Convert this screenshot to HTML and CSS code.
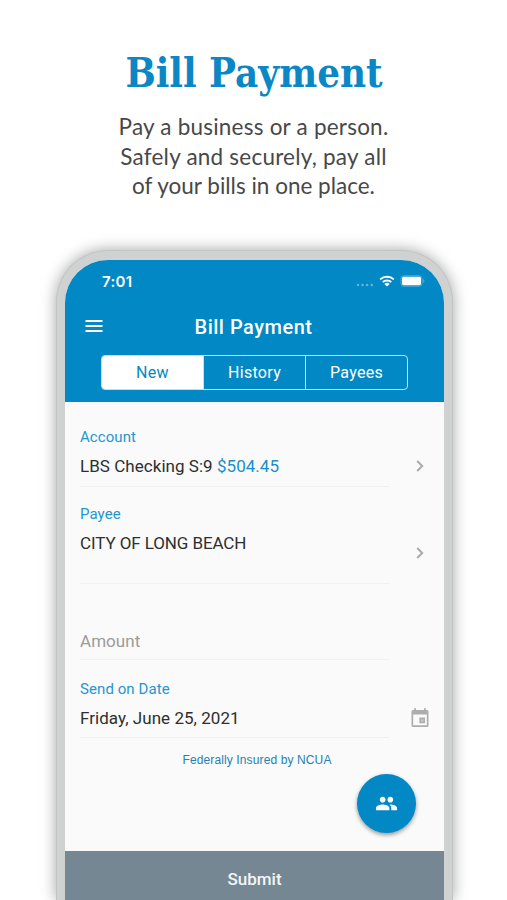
FILE: index.html
```html
<!DOCTYPE html>
<html lang="en">
<head>
    <meta charset="UTF-8">
    <meta name="viewport" content="width=device-width, initial-scale=1.0">
    <title>Bill Payment</title>
    <link rel="stylesheet" href="styles.css">
</head>
<body>
    <section class="promo">
        <h1><span>Bill Payment</span></h1>
        <p>Pay a business or a person.<br>Safely and securely, pay all<br><span class="last-line">of your bills in one place.</span></p>
    </section>

    <div class="phone">
        <div class="screen">
            <header>
                <div class="status-bar">
                    <span class="time">7:01</span>
                    <div class="status-icons">
                        <svg class="signal" width="18" height="4" viewBox="0 0 18 4">
                            <circle cx="2" cy="2" r="1.2"/>
                            <circle cx="6.6" cy="2" r="1.2"/>
                            <circle cx="11.2" cy="2" r="1.2"/>
                            <circle cx="15.8" cy="2" r="1.2"/>
                        </svg>
                        <svg class="wifi" width="16" height="12" viewBox="0 0 16 12">
                            <path d="M1.2 4.4a9.8 9.8 0 0 1 13.6 0M3.8 7.1a6.1 6.1 0 0 1 8.4 0" fill="none" stroke="#fff" stroke-width="2"/>
                            <path d="M8 11.4L5.4 8.9a3.8 3.8 0 0 1 5.2 0z" fill="#fff"/>
                        </svg>
                        <svg class="battery" width="26" height="12" viewBox="0 0 26 12">
                            <rect x="1" y=".8" width="21" height="10.4" rx="2.8" fill="none" stroke="#fff" stroke-opacity=".3"/>
                            <rect x="2" y="1.8" width="19" height="8.4" rx="1.6" fill="#fff"/>
                            <path d="M23.3 4v4c1.4-.6 1.4-3.4 0-4z" fill="#fff" fill-opacity=".4"/>
                        </svg>
                    </div>
                </div>
                <div class="title-bar">
                    <svg class="menu" width="18" height="12" viewBox="0 0 18 12">
                        <path d="M.5 1h17M.5 6h17M.5 11h17" stroke="#fff" stroke-width="2"/>
                    </svg>
                    <h2>Bill Payment</h2>
                </div>
                <nav class="tabs">
                    <a class="tab active">New</a>
                    <a class="tab">History</a>
                    <a class="tab">Payees</a>
                </nav>
            </header>

            <main>
                <div class="field account">
                    <div class="field-body">
                        <label>Account</label>
                        <div class="value">LBS Checking S:9 <span class="balance">$504.45</span></div>
                    </div>
                    <svg class="chevron" width="8" height="12" viewBox="0 0 8 12"><path d="M1.2 1l5 5-5 5"/></svg>
                </div>
                <div class="field payee">
                    <div class="field-body">
                        <label>Payee</label>
                        <div class="value">CITY OF LONG BEACH</div>
                    </div>
                    <svg class="chevron" width="8" height="12" viewBox="0 0 8 12"><path d="M1.2 1l5 5-5 5"/></svg>
                </div>
                <div class="field amount">
                    <div class="field-body">
                        <div class="value placeholder">Amount</div>
                    </div>
                </div>
                <div class="field date">
                    <div class="field-body">
                        <label>Send on Date</label>
                        <div class="value">Friday, June 25, 2021</div>
                    </div>
                    <svg class="calendar" width="18" height="20" viewBox="0 0 18 20">
                        <path d="M2 2h14a1.5 1.5 0 0 1 1.5 1.5v14A1.5 1.5 0 0 1 16 19H2a1.5 1.5 0 0 1-1.5-1.5v-14A1.5 1.5 0 0 1 2 2zm.2 4.500v10.800h13.600V6.500z" fill-rule="evenodd"/>
                        <path d="M3.200.3h1.800V3H3.200zM13 .3h1.800V3H13z"/>
                        <path d="M9.200 10.300h4v4h-4z" fill="#ccc" stroke="#adadad" stroke-width="1.7"/>
                    </svg>
                </div>
                <p class="insured">Federally Insured by NCUA</p>
                <button class="fab" aria-label="People">
                    <svg width="23" height="23" viewBox="0 0 24 24">
                        <path fill="#fff" d="M16 11c1.660 0 2.990-1.340 2.990-3S17.660 5 16 5s-3 1.340-3 3 1.340 3 3 3zm-8 0c1.660 0 2.990-1.340 2.990-3S9.660 5 8 5 5 6.340 5 8s1.340 3 3 3zm0 2c-2.330 0-7 1.170-7 3.500V19h14v-2.500c0-2.330-4.670-3.500-7-3.500zm8 0c-.29 0-.62.020-.97.050 1.160.84 1.970 1.970 1.970 3.450V19h6v-2.500c0-2.330-4.670-3.500-7-3.500z"/>
                    </svg>
                </button>
            </main>

            <button class="submit">Submit</button>
        </div>
    </div>
</body>
</html>
```

FILE: styles.css
```css
* {
    box-sizing: border-box;
}

body {
    margin: 0;
    height: 900px;
    overflow: hidden;
    background-color: #fff;
    font-family: Roboto, Arial, sans-serif;
    color: #333;
}

.promo {
    height: 250px;
    padding-top: 44px;
    text-align: center;
}

h1 {
    margin: 0;
    font-family: "DejaVu Serif", serif;
    font-size: 41px;
    line-height: 58px;
    font-weight: bold;
    color: #0a87c4;
    white-space: nowrap;
}

h1 span {
    display: inline-block;
    transform: scaleX(0.875);
}

.promo p {
    margin: 10px 0 0;
    font-family: Lato, sans-serif;
    font-size: 22.5px;
    line-height: 29.5px;
    letter-spacing: 0.22px;
    color: #484848;
}

.last-line {
    letter-spacing: 0;
}

.phone {
    width: 397px;
    height: 650px;
    margin-left: 56px;
    padding: 9px 8px 0;
    background-color: #d0d2d2;
    border: 1px solid #c3c5c5;
    border-bottom: none;
    border-radius: 52px 52px 0 0;
    box-shadow: 0 0 15px rgba(0,0,0,0.36);
}

.screen {
    height: 640px;
    display: flex;
    flex-direction: column;
    border-radius: 43px 43px 0 0;
    overflow: hidden;
    background-color: #fafafa;
}

header {
    height: 142px;
    flex-shrink: 0;
    background-color: #0288c5;
    color: #fff;
}

.status-bar {
    display: flex;
    justify-content: space-between;
    align-items: center;
    height: 42px;
    padding: 0 18px 0 37px;
}

.time {
    font-family: Inter, sans-serif;
    font-size: 15px;
    font-weight: 600;
    letter-spacing: 0.3px;
}

.status-icons {
    display: flex;
    align-items: center;
}

.signal {
    margin: 7px 5px 0 0;
    fill: rgba(255,255,255,0.4);
}

.wifi {
    margin-right: 5px;
}

.title-bar {
    display: grid;
    grid-template-columns: 1fr auto 1fr;
    align-items: center;
    height: 50px;
    padding: 0 22px 0 20px;
}

.menu {
    margin-bottom: 2px;
}

h2 {
    margin: 0;
    font-size: 20px;
    font-weight: 500;
    letter-spacing: 0.5px;
}

.tabs {
    display: flex;
    width: 307px;
    height: 35px;
    margin: 3px 0 0 36px;
    border: 1px solid rgba(255,255,255,0.75);
    border-radius: 4px;
    overflow: hidden;
}

.tab {
    flex: 1;
    display: flex;
    align-items: center;
    justify-content: center;
    font-size: 16px;
    letter-spacing: 0.3px;
}

.tab + .tab {
    border-left: 1px solid rgba(255,255,255,0.75);
}

.tab.active {
    background-color: #fff;
    color: #0288c5;
}

main {
    position: relative;
    flex: 1;
}

.field {
    display: flex;
    align-items: center;
    padding: 0 14px 0 15px;
}

.field-body {
    width: 309px;
    height: 100%;
    border-bottom: 1px solid #f0f0f0;
}

.account {
    height: 85px;
}

.account .field-body {
    padding-top: 25px;
}

.payee {
    height: 97px;
}

.payee .field-body {
    padding-top: 17px;
}

.amount {
    height: 76px;
}

.amount .field-body {
    padding-top: 45px;
}

.date {
    height: 78px;
}

.date .field-body {
    padding-top: 19px;
}

label {
    display: block;
    font-size: 15px;
    line-height: 20px;
    letter-spacing: 0.08px;
    color: #2596cf;
}

.value {
    margin-top: 7px;
    font-size: 17px;
    line-height: 24px;
    letter-spacing: 0.04px;
    color: #2e2e2e;
}

.payee .value {
    letter-spacing: -0.1px;
}

.amount .value {
    margin-top: 0;
}

.amount .placeholder {
    color: #9b9b9b;
}

.balance {
    color: #1a8fc9;
}

.chevron {
    margin-left: 27px;
    fill: none;
    stroke: #aaa;
    stroke-width: 2;
}

.account .chevron {
    margin-top: 43px;
}

.payee .chevron {
    margin-top: 35px;
}

.calendar {
    margin: 38px 0 0 22px;
    fill: #adadad;
}

.insured {
    margin: 15px 0 0;
    padding-left: 5px;
    text-align: center;
    font-family: "Liberation Sans", Arial, sans-serif;
    font-size: 12px;
    line-height: 14px;
    letter-spacing: 0.12px;
    color: #2482b4;
}

.fab {
    position: absolute;
    right: 28px;
    bottom: 18px;
    width: 59px;
    height: 59px;
    padding: 0;
    display: flex;
    align-items: center;
    justify-content: center;
    border: none;
    border-radius: 50%;
    background-color: #0288c5;
    box-shadow: 0 2px 4px rgba(0,0,0,0.4);
}

.fab svg {
    margin-bottom: 1px;
}

.submit {
    height: 49px;
    flex-shrink: 0;
    padding: 7px 0 0;
    border: none;
    background-color: #758793;
    color: #f2f6f8;
    font-family: Roboto, Arial, sans-serif;
    font-size: 17px;
    font-weight: 500;
}
```
